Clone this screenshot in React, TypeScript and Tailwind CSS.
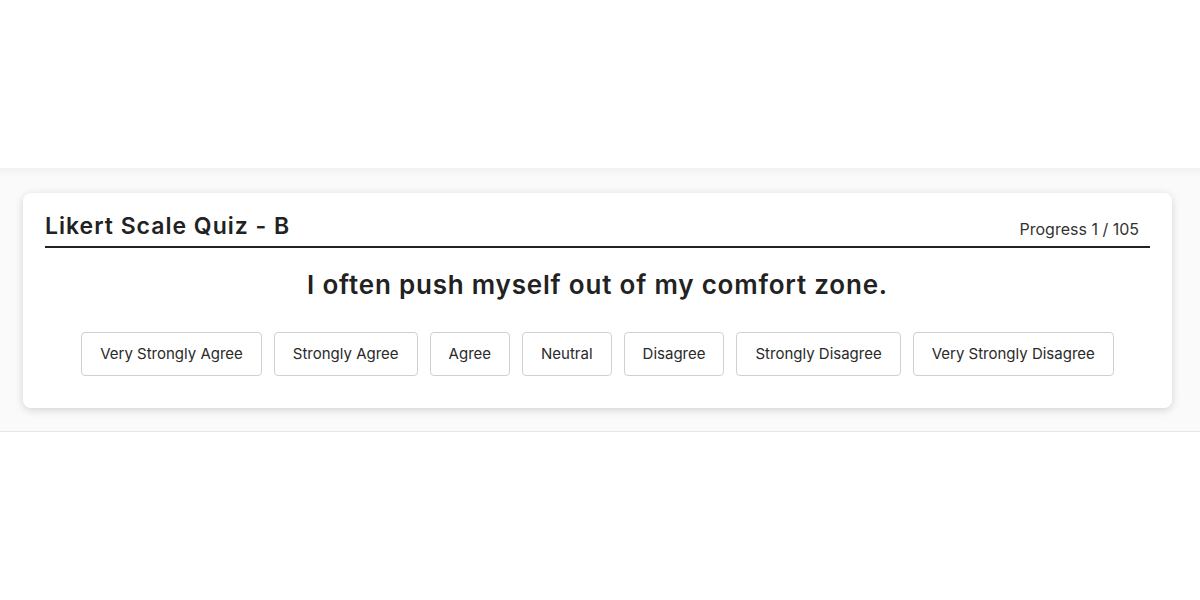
const options = [
  "Very Strongly Agree",
  "Strongly Agree",
  "Agree",
  "Neutral",
  "Disagree",
  "Strongly Disagree",
  "Very Strongly Disagree",
];

export default function App() {
  return (
    <div className="min-h-[600px] bg-white pt-[168px] font-['Inter',sans-serif] text-[#222]">
      <section className="border-b border-[#e6e6e6] bg-[#fafafa] pb-[23px] pl-[23px] pr-[28px] pt-[25px] shadow-[inset_0_8px_8px_-6px_rgba(0,0,0,0.06)]">
        <div className="rounded-lg bg-white px-[22px] pb-[32px] pt-[18px] shadow-[0_2px_8px_rgba(0,0,0,0.16)]">
          <div className="flex items-end justify-between border-b-2 border-[#222] pb-[5px]">
            <h2 className="text-[23px] font-semibold leading-[30px] tracking-[1px]">
              Likert Scale Quiz - B
            </h2>
            <span className="pr-[11px] text-[16px] leading-[24px] text-[#333]">
              Progress 1 / 105
            </span>
          </div>
          <p className="mt-[19px] text-center text-[26px] font-semibold leading-[36px] tracking-[0.8px]">
            I often push myself out of my comfort zone.
          </p>
          <div className="mt-[29px] flex justify-center gap-[12px]">
            {options.map((o) => (
              <button
                key={o}
                className="h-[44px] rounded-[4px] border border-[#d0d0d0] bg-white px-[18px] text-[15px] text-[#2a2a2a]"
              >
                {o}
              </button>
            ))}
          </div>
        </div>
      </section>
    </div>
  );
}
